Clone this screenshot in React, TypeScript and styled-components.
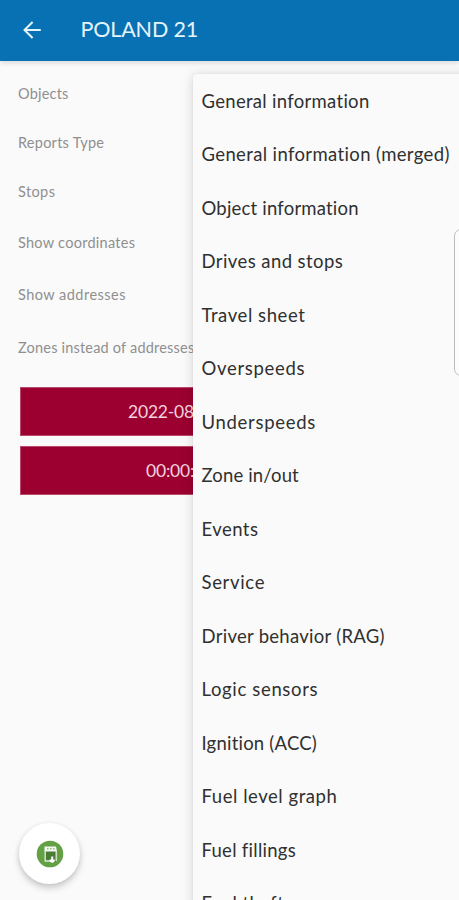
import React from "react";
import styled, { createGlobalStyle } from "styled-components";

const GlobalStyle = createGlobalStyle`
  * { box-sizing: border-box; }
  body { margin: 0; background: #fafafa; overflow: hidden; }
`;

const Screen = styled.div`
  position: relative;
  width: 459px;
  height: 900px;
  overflow: hidden;
  background: #fafafa;
  font-family: Lato, "Open Sans", sans-serif;
`;

const AppBar = styled.header`
  display: flex;
  align-items: center;
  height: 61px;
  padding: 0 0 3px 20px;
  background: #0871b3;
  box-shadow: 0 2px 5px rgba(0, 0, 0, 0.13);
`;

const BackButton = styled.button`
  display: flex;
  width: 24px;
  height: 24px;
  margin-top: 1px;
  padding: 0;
  border: 0;
  background: none;
`;

const Title = styled.h1`
  margin: 0 0 0 36.5px;
  color: #e5f4fb;
  font-size: 21.5px;
  font-weight: 400;
  letter-spacing: -0.15px;
  white-space: nowrap;
`;

const Form = styled.main`
  padding: 7px 20px 0 18px;
`;

const Field = styled.div<{ $height: number; $spacing: number }>`
  display: flex;
  align-items: center;
  height: ${(p) => p.$height}px;
  color: #8f8f8f;
  font-size: 14.5px;
  letter-spacing: ${(p) => p.$spacing}px;
  white-space: nowrap;
`;

const DateButtons = styled.div`
  display: flex;
  flex-direction: column;
  gap: 10px;
  padding: 13px 0 0 2px;
`;

const DateButton = styled.button<{ $inset: number }>`
  height: 49px;
  padding: 0 0 0 ${(p) => p.$inset}px;
  border: 1px solid #b94a6c;
  background: #9b0030;
  color: #f3d3dd;
  font: 400 17.5px Lato, "Open Sans", sans-serif;
  letter-spacing: -0.2px;
  text-align: left;
  white-space: nowrap;
`;

const Menu = styled.ul`
  position: absolute;
  top: 74px;
  left: 192.5px;
  width: 290px;
  height: 850px;
  margin: 0;
  padding: 0;
  list-style: none;
  background: #fafafa;
  border-radius: 3px 0 0 0;
  box-shadow: 0 1px 12px rgba(0, 0, 0, 0.16), 0 0 2px rgba(0, 0, 0, 0.05);
`;

const MenuItem = styled.li<{ $spacing: number }>`
  display: flex;
  align-items: center;
  height: 53.5px;
  padding-left: 9px;
  color: #303030;
  font-size: 18.5px;
  letter-spacing: ${(p) => p.$spacing}px;
  white-space: nowrap;
`;

const EdgeHandle = styled.div`
  position: absolute;
  top: 229px;
  left: 454px;
  width: 30px;
  height: 147px;
  border: 1px solid #bdbdbd;
  border-radius: 7px;
  background: #fcfcfc;
`;

const ReportButton = styled.button`
  position: absolute;
  top: 823px;
  left: 19px;
  display: flex;
  align-items: center;
  justify-content: center;
  width: 61px;
  height: 61px;
  padding: 0;
  border: 0;
  border-radius: 50%;
  background: #fff;
  box-shadow: 0 4px 7px rgba(0, 0, 0, 0.18), 0 1px 5px rgba(0, 0, 0, 0.07);
`;

const fields = [
  { label: "Objects", height: 50.5, spacing: 0.2 },
  { label: "Reports Type", height: 48.5, spacing: 0.25 },
  { label: "Stops", height: 49.5, spacing: 0.4 },
  { label: "Show coordinates", height: 51, spacing: 0.27 },
  { label: "Show addresses", height: 53, spacing: 0.47 },
  { label: "Zones instead of addresses", height: 53, spacing: 0.2 },
];

const reports: [string, number][] = [
  ["General information", 0.3],
  ["General information (merged)", 0.37],
  ["Object information", 0.2],
  ["Drives and stops", 0.42],
  ["Travel sheet", 0.57],
  ["Overspeeds", 0.7],
  ["Underspeeds", 0.7],
  ["Zone in/out", 0.15],
  ["Events", 0.45],
  ["Service", 0.68],
  ["Driver behavior (RAG)", 0.28],
  ["Logic sensors", 0.65],
  ["Ignition (ACC)", 0.22],
  ["Fuel level graph", 0.54],
  ["Fuel fillings", 0.27],
  ["Fuel thefts", 0.4],
];

export default function App() {
  return (
    <Screen>
      <GlobalStyle />
      <AppBar>
        <BackButton aria-label="Back">
          <svg width="24" height="24" viewBox="0 0 24 24" fill="none" stroke="#e5f4fb" strokeWidth="2">
            <path d="M20.8 12H4.5M12.6 4L4.5 12l8.1 8" />
          </svg>
        </BackButton>
        <Title>POLAND 21</Title>
      </AppBar>
      <Form>
        {fields.map((f) => (
          <Field key={f.label} $height={f.height} $spacing={f.spacing}>{f.label}</Field>
        ))}
        <DateButtons>
          <DateButton $inset={107}>2022-08</DateButton>
          <DateButton $inset={125}>00:00:</DateButton>
        </DateButtons>
      </Form>
      <Menu>
        {reports.map(([label, spacing]) => (
          <MenuItem key={label} $spacing={spacing}>{label}</MenuItem>
        ))}
      </Menu>
      <EdgeHandle />
      <ReportButton aria-label="Generate report">
        <svg width="28" height="28" viewBox="0 0 28 28">
          <circle cx="14" cy="14" r="13.3" fill="#64a044" />
          <path d="M9 7h11v15H9z" fill="#4a7c35" />
          <path d="M8.5 6.5h11.5l1 5H8.5z" fill="#f4f8f1" />
          <path d="M9.2 10v11h6M20.2 10v11" fill="none" stroke="#e4eede" strokeWidth="1.3" />
          <path d="M15.2 16.5h2v3h1.6v2l-2.6 1.6-2.6-1.6v-2h1.6z" fill="#fff" />
          <path d="M11 8.8h1.5M14 8.8h1.5M17 8.8h1.5" stroke="#64a044" strokeWidth="1" />
        </svg>
      </ReportButton>
    </Screen>
  );
}
